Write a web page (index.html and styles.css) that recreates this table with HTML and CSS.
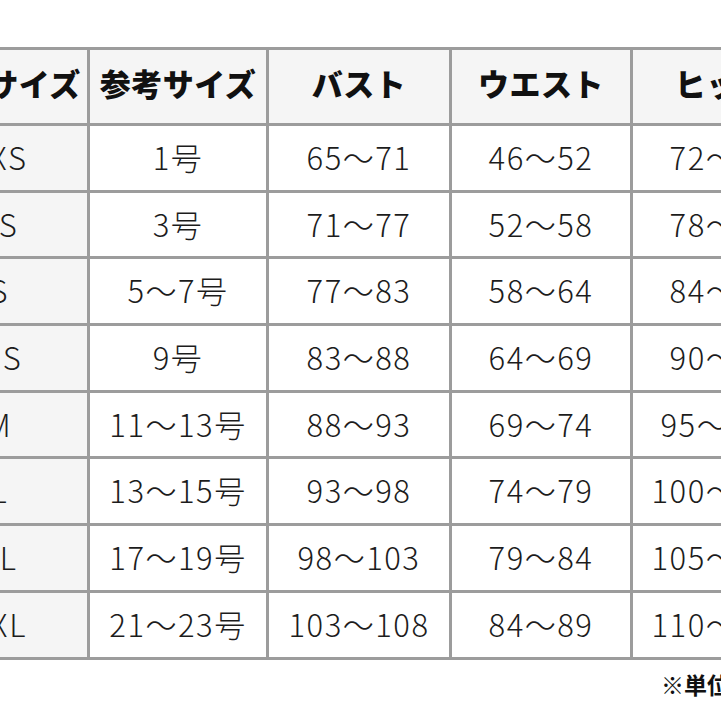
FILE: index.html
```html
<!DOCTYPE html>
<html lang="ja">
<head>
<meta charset="utf-8">
<link rel="stylesheet" href="styles.css">
</head>
<body>
<div class="sheet">
  <table class="size-table">
    <thead>
      <tr>
        <th>表記サイズ</th>
        <th>参考サイズ</th>
        <th>バスト</th>
        <th>ウエスト</th>
        <th>ヒップ</th>
      </tr>
    </thead>
    <tbody>
      <tr><td class="label">XXS</td><td>1号</td><td>65〜71</td><td>46〜52</td><td>72〜78</td></tr>
      <tr><td class="label">XS</td><td>3号</td><td>71〜77</td><td>52〜58</td><td>78〜84</td></tr>
      <tr><td class="label">S</td><td>5〜7号</td><td>77〜83</td><td>58〜64</td><td>84〜90</td></tr>
      <tr><td class="label">MS</td><td>9号</td><td>83〜88</td><td>64〜69</td><td>90〜95</td></tr>
      <tr><td class="label">M</td><td>11〜13号</td><td>88〜93</td><td>69〜74</td><td>95〜100</td></tr>
      <tr><td class="label">L</td><td>13〜15号</td><td>93〜98</td><td>74〜79</td><td>100〜105</td></tr>
      <tr><td class="label">XL</td><td>17〜19号</td><td>98〜103</td><td>79〜84</td><td>105〜110</td></tr>
      <tr><td class="label">XXL</td><td>21〜23号</td><td>103〜108</td><td>84〜89</td><td>110〜115</td></tr>
    </tbody>
  </table>
  <p class="note">※単位：cm</p>
</div>
</body>
</html>
```

FILE: styles.css
```css
html, body {
  margin: 0;
  padding: 0;
  background: #ffffff;
  overflow: hidden;
}

body {
  font-family: "Noto Sans CJK JP", "Noto Sans", sans-serif;
  color: #1c1c1c;
}

.sheet {
  padding-top: 47px;
  margin-left: -85px;
  width: 820px;
}

.size-table {
  border-collapse: collapse;
  table-layout: fixed;
  width: 810px;
}

.size-table th,
.size-table td {
  border: 3px solid #9c9c9c;
  text-align: center;
  vertical-align: middle;
  padding: 0;
  white-space: nowrap;
  overflow: hidden;
}

.size-table th {
  height: 65px;
  padding-bottom: 8px;
  background: #f5f5f5;
  font-size: 31px;
  font-weight: 900;
  letter-spacing: 0.5px;
  color: #111;
}

.size-table th:nth-child(1) { width: 169px; }
.size-table th:nth-child(2) { width: 176px; }
.size-table th:nth-child(3) { width: 180px; }
.size-table th:nth-child(4) { width: 178px; }
.size-table th:nth-child(5) { width: 178px; }

.size-table td {
  height: 60.7px;
  padding-bottom: 3px;
  font-size: 31px;
  font-weight: 300;
  letter-spacing: 1.5px;
}

.size-table td.label {
  background: #f5f5f5;
  padding-right: 6px;
  letter-spacing: 2px;
}

.note {
  margin: 7px 0 0 746px;
  font-size: 23px;
  font-weight: 700;
  white-space: nowrap;
  color: #111;
}
```
